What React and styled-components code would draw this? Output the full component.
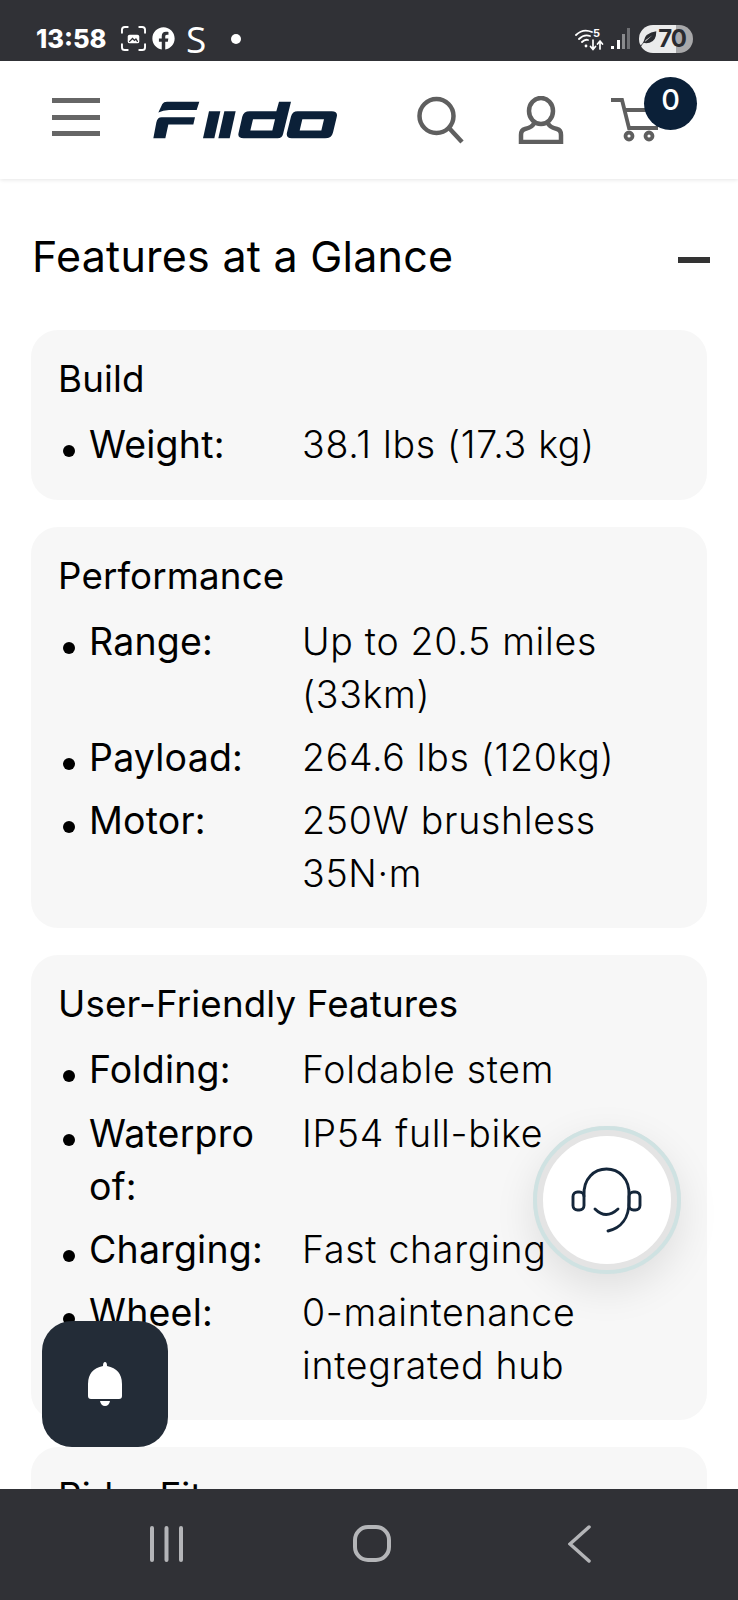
import React from "react";
import styled, { createGlobalStyle } from "styled-components";
import { FaFacebook } from "react-icons/fa";

const Global = createGlobalStyle`
  html, body { margin: 0; padding: 0; background: #fff; }
  * { box-sizing: border-box; }
`;

const Screen = styled.div`
  position: relative;
  width: 738px;
  height: 1600px;
  overflow: hidden;
  display: flex;
  flex-direction: column;
  background: #fff;
  color: #000;
  font-family: "Inter", "Liberation Sans", sans-serif;
`;

const StatusBar = styled.div`
  flex: 0 0 61px;
  background: #303136;
  color: #fff;
  display: flex;
  align-items: center;
  padding: 16px 45px 0 36px;
  position: relative;
  z-index: 2;
`;
const Clock = styled.span`
  font: 800 25.5px "Inter", sans-serif;
  width: 85px;
`;
const StatusLeft = styled.div`
  display: flex;
  align-items: center;
  gap: 6px;
`;
const StatusS = styled.span`
  font: 400 37px "Open Sans", sans-serif;
  line-height: 38px;
  margin-left: 5px;
`;
const StatusDot = styled.span`
  width: 10px;
  height: 10px;
  border-radius: 50%;
  background: #fff;
  margin-left: 19px;
`;
const StatusRight = styled.div`
  margin-left: auto;
  display: flex;
  align-items: center;
  gap: 7px;
`;
const Battery = styled.div`
  width: 54px;
  height: 28px;
  border-radius: 14px;
  margin-left: 1px;
  display: flex;
  align-items: center;
  justify-content: flex-end;
  padding-right: 7px;
  color: #2a2b30;
  font: 700 24px "Inter", sans-serif;
  letter-spacing: -1px;
  background: linear-gradient(90deg, #ebebec 0 37px, #a8a8aa 37px);
`;

const Header = styled.header`
  flex: 0 0 118px;
  background: #fff;
  display: flex;
  align-items: center;
  padding: 0 0 0 52px;
  box-shadow: 0 1px 4px rgba(0, 0, 0, 0.1);
  position: relative;
  z-index: 1;
`;
const Burger = styled.div`
  width: 48px;
  height: 38px;
  display: flex;
  flex-direction: column;
  justify-content: space-between;
  margin: -6px 53px 0 0;
  span { display: block; height: 5px; background: #666; }
`;
const HeaderIcons = styled.div`
  margin-left: 78px;
  display: grid;
  grid-template-columns: 102px 92px 52px;
  align-items: center;
`;
const CartWrap = styled.div`
  position: relative;
  width: 52px;
  height: 44px;
`;
const Badge = styled.div`
  position: absolute;
  left: 34px;
  top: -21px;
  width: 53px;
  height: 53px;
  border-radius: 50%;
  background: #0b2038;
  color: #fff;
  font: 500 29px/46px "Inter", sans-serif;
  text-align: center;
`;

const Main = styled.main`
  flex: 1;
  overflow: hidden;
  padding: 49px 31px 0 31px;
`;
const TitleRow = styled.div`
  display: flex;
  align-items: center;
  justify-content: space-between;
  height: 56px;
  margin-bottom: 46px;
  padding-left: 1px;
`;
const Title = styled.h2`
  margin: 0;
  font-size: 43px;
  font-weight: 400;
  letter-spacing: 0.25px;
  line-height: 56px;
  white-space: nowrap;
`;
const Minus = styled.span`
  width: 32px;
  height: 6px;
  background: #333;
  margin: 8px -3px 0 0;
`;
const Card = styled.section`
  background: #f7f7f7;
  border-radius: 27px;
  padding: 25px 27px 28.5px;
  margin-bottom: 27px;
`;
const CardTitle = styled.h3`
  margin: 0 0 15px;
  font-size: 36.7px;
  font-weight: 400;
  letter-spacing: 0.15px;
  line-height: 48px;
`;
const List = styled.ul`
  margin: 0;
  padding: 0;
  list-style: none;
  display: flex;
  flex-direction: column;
  gap: 10.2px;
`;
const Row = styled.li`
  display: grid;
  grid-template-columns: 31px 213px 1fr;
  font-size: 37.5px;
  line-height: 53px;
  &::before {
    content: "";
    width: 12px;
    height: 12px;
    border-radius: 50%;
    background: #000;
    margin: 27px 0 0 5px;
  }
`;
const Label = styled.span`
  font-weight: 400;
  letter-spacing: 0.2px;
`;
const Value = styled.span`
  font-weight: 300;
  letter-spacing: 0.7px;
`;

const BellButton = styled.div`
  position: absolute;
  left: 42px;
  top: 1321px;
  width: 126px;
  height: 126px;
  border-radius: 30px;
  background: #232c37;
  display: flex;
  align-items: center;
  justify-content: center;
`;
const ChatButton = styled.div`
  position: absolute;
  left: 533px;
  top: 1126px;
  width: 148px;
  height: 148px;
  border-radius: 50%;
  background: #fff;
  border: 10px solid #e4e4e4;
  outline: 4px solid #cfe2e2;
  outline-offset: -4px;
  box-shadow: 0 14px 40px rgba(0, 0, 0, 0.1);
  display: flex;
  align-items: center;
  justify-content: center;
`;

const BottomNav = styled.nav`
  position: absolute;
  left: 0;
  right: 0;
  bottom: 0;
  height: 111px;
  background: #303136;
  display: grid;
  grid-template-columns: 150px 33px 170px 38px 177px 23px;
  align-items: center;
  padding-bottom: 2px;
`;

const Logo = () => (
  <svg width="185" height="38" viewBox="24 33 555 115" preserveAspectRatio="none" fill="#0b2038">
    <path d="M40 68 L52 42 Q56 35 66 35 L163 35 L155 60 L72 60 Q54 61 40 68Z" />
    <path d="M50 82 L150 82 L145 104 L70 104 L61 146 L25 146 L34 98 Q37 82 50 82Z" />
    <path d="M192 64 L226 64 L208 146 L174 146Z" />
    <path d="M238 64 L272 64 L254 146 L220 146Z" />
    <path fillRule="evenodd" d="M402 35 L438 35 L414 134 Q411 146 398 146 L296 146 Q276 146 281 128 L292 80 Q296 64 314 64 L394 64Z M324 88 L390 88 L382 122 L316 122Z" />
    <path fillRule="evenodd" d="M458 64 L560 64 Q580 64 575 82 L564 128 Q560 146 540 146 L440 146 Q422 146 426 128 L438 80 Q442 64 458 64Z M472 88 L537 88 L529 122 L464 122Z" />
  </svg>
);

const ic = { fill: "none", stroke: "#5f5f5f", strokeWidth: 4.5 };

export default function App() {
  return (
    <Screen>
      <Global />
      <StatusBar>
        <Clock>13:58</Clock>
        <StatusLeft>
          <svg width="25" height="25" viewBox="0 0 26 26" fill="none" stroke="#fff" strokeWidth="2" strokeLinecap="round">
            <path d="M1 7V4Q1 1 4 1H7M19 1H22Q25 1 25 4V7M25 19V22Q25 25 22 25H19M7 25H4Q1 25 1 22V19" />
            <rect x="7" y="9" width="12" height="9" rx="2" fill="#fff" stroke="none" />
            <path d="M9 16L12 13L14 15L15.5 13.5L17 16" stroke="#303136" strokeWidth="1.4" />
          </svg>
          <FaFacebook size={23} color="#fff" />
          <StatusS>S</StatusS>
          <StatusDot />
        </StatusLeft>
        <StatusRight>
          <svg width="29" height="24" viewBox="0 0 29 24" fill="none" stroke="#fff" strokeWidth="1.8" strokeLinecap="round">
            <path d="M1 8Q8 1 17 5M4 12Q9 7 15 9M7 15Q10 12 13 13" />
            <circle cx="11" cy="19" r="1.4" fill="#fff" stroke="none" />
            <path d="M18 13V22M15.5 19.5L18 22.5L20.5 19.5M25 22V14M22.5 17L25 14L27.5 17" strokeWidth="1.7" />
            <text x="18" y="10" fill="#fff" stroke="none" fontSize="11" fontWeight="700" fontFamily="Inter">5</text>
          </svg>
          <svg width="20" height="22" viewBox="0 0 20 22">
            <rect x="0" y="18" width="3" height="3" fill="#fff" />
            <rect x="6" y="12" width="3" height="9" fill="#fff" />
            <rect x="11" y="6" width="3" height="15" fill="#8a8b8e" />
            <rect x="16" y="0" width="3" height="21" fill="#6e6f73" />
          </svg>
          <Battery>
            <svg width="20" height="18" viewBox="0 0 20 18" fill="#2a2b30">
              <path fillRule="evenodd" d="M1 16Q4 14 5 11Q6 3 18 1Q18 11 11 13Q7 14 5 13Q3 15 2 17Z M6 12L14 5L7 10Z" />
            </svg>
            70
          </Battery>
        </StatusRight>
      </StatusBar>

      <Header>
        <Burger><span /><span /><span /></Burger>
        <Logo />
        <HeaderIcons>
          <svg width="48" height="48" viewBox="0 0 48 48" {...ic}>
            <circle cx="20.5" cy="20" r="17" />
            <path d="M33 32L46 46" />
          </svg>
          <svg width="46" height="48" viewBox="0 0 46 48" {...ic}>
            <ellipse cx="23" cy="15" rx="12" ry="13" />
            <path d="M16 27Q15 31 7 33Q3 34 3 39V46H43V39Q43 34 39 33Q31 31 30 27" />
          </svg>
          <CartWrap>
            <svg width="52" height="44" viewBox="0 0 52 44" {...ic} strokeWidth="3.8">
              <path d="M1 2H12L19 30H48" />
              <path d="M14 12H48" />
              <circle cx="19" cy="38" r="3.5" />
              <circle cx="39" cy="38" r="3.5" />
            </svg>
            <Badge>0</Badge>
          </CartWrap>
        </HeaderIcons>
      </Header>

      <Main>
        <TitleRow>
          <Title>Features at a Glance</Title>
          <Minus />
        </TitleRow>
        <Card>
          <CardTitle>Build</CardTitle>
          <List>
            <Row><Label>Weight:</Label><Value>38.1 lbs (17.3 kg)</Value></Row>
          </List>
        </Card>
        <Card>
          <CardTitle>Performance</CardTitle>
          <List>
            <Row><Label>Range:</Label><Value>Up to 20.5 miles<br />(33km)</Value></Row>
            <Row><Label>Payload:</Label><Value>264.6 lbs (120kg)</Value></Row>
            <Row><Label>Motor:</Label><Value>250W brushless<br />35N·m</Value></Row>
          </List>
        </Card>
        <Card>
          <CardTitle>User-Friendly Features</CardTitle>
          <List>
            <Row><Label>Folding:</Label><Value>Foldable stem</Value></Row>
            <Row><Label>Waterpro<br />of:</Label><Value>IP54 full-bike</Value></Row>
            <Row><Label>Charging:</Label><Value>Fast charging</Value></Row>
            <Row><Label>Wheel:</Label><Value>0-maintenance<br />integrated hub</Value></Row>
          </List>
        </Card>
        <Card>
          <CardTitle>Rider Fit</CardTitle>
        </Card>
      </Main>

      <ChatButton>
        <svg width="72" height="68" viewBox="0 0 72 68" fill="none" stroke="#14263a" strokeWidth="2.9" strokeLinecap="round">
          <path d="M13 30C11 -6 60 -6 58 30V36C58 52 50 62 37 65" />
          <rect x="2" y="26" width="11" height="18" rx="4.5" />
          <rect x="58" y="26" width="11" height="18" rx="4.5" />
          <path d="M24 43Q35 54 47 43" />
        </svg>
      </ChatButton>

      <BellButton>
        <svg width="38" height="44" viewBox="0 0 38 44" fill="#fff">
          <path d="M19 0Q21 0 21 4Q36 7 36 22V34Q36 37 33 37H5Q2 37 2 34V22Q2 7 17 4Q17 0 19 0Z" />
          <path d="M14 39H24Q23 44 19 44Q15 44 14 39Z" />
        </svg>
      </BellButton>

      <BottomNav>
        <span />
        <svg width="33" height="36" viewBox="0 0 33 36" stroke="#b4b5b8" strokeWidth="4" strokeLinecap="round">
          <path d="M2 2V34M16.5 2V34M31 2V34" />
        </svg>
        <span />
        <svg width="38" height="37" viewBox="0 0 38 37" fill="none" stroke="#b4b5b8" strokeWidth="4">
          <rect x="2" y="2" width="34" height="33" rx="13" />
        </svg>
        <span />
        <svg width="23" height="38" viewBox="0 0 23 38" fill="none" stroke="#b4b5b8" strokeWidth="3.5" strokeLinecap="round">
          <path d="M21 2L2 19L21 36" />
        </svg>
      </BottomNav>
    </Screen>
  );
}
